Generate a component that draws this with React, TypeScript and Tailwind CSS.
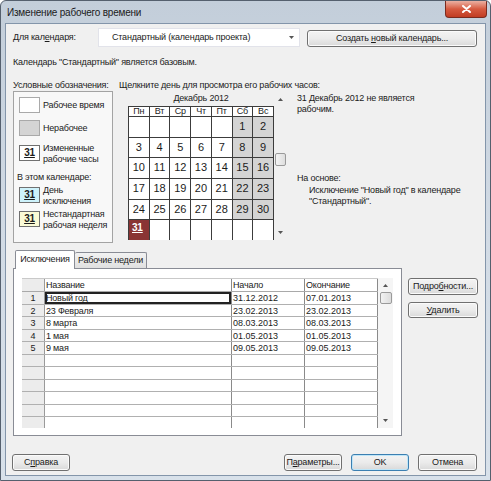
import React from "react";

const weeks: (number | null)[][] = [
  [null, null, null, null, null, 1, 2],
  [3, 4, 5, 6, 7, 8, 9],
  [10, 11, 12, 13, 14, 15, 16],
  [17, 18, 19, 20, 21, 22, 23],
  [24, 25, 26, 27, 28, 29, 30],
  [31, null, null, null, null, null, null]
];

const dayNames = ["Пн", "Вт", "Ср", "Чт", "Пт", "Сб", "Вс"];

const exceptions = [
  ["1", "Новый год", "31.12.2012", "07.01.2013"],
  ["2", "23 Февраля", "23.02.2013", "23.02.2013"],
  ["3", "8 марта", "08.03.2013", "08.03.2013"],
  ["4", "1 мая", "01.05.2013", "01.05.2013"],
  ["5", "9 мая", "09.05.2013", "09.05.2013"]
];

function Btn({
  children,
  className = "",
  primary = false
}: {
  children: React.ReactNode;
  className?: string;
  primary?: boolean;
}) {
  return (
    <button
      type="button"
      className={`flex items-center justify-center rounded-[3px] border bg-gradient-to-b from-[#f3f3f3] via-[#ebebeb] to-[#d9d9d9] text-[9px] leading-none text-[#1a1a1a] ${
        primary
          ? "border-[#3c7fb1] shadow-[inset_0_0_0_1px_#bfe6f8]"
          : "border-[#707070] shadow-[inset_0_0_0_1px_#fbfbfb]"
      } ${className}`}
    >
      <span className="whitespace-nowrap">{children}</span>
    </button>
  );
}

function Arrow({ down = false }: { down?: boolean }) {
  return (
    <svg width="5" height="3" viewBox="0 0 5 3" className="block">
      <path d={down ? "M0 0h5L2.5 3z" : "M0 3h5L2.5 0z"} fill="#555" />
    </svg>
  );
}

function Swatch({ className = "", num = false }: { className?: string; num?: boolean }) {
  return (
    <div
      className={`flex h-[16px] w-[21px] shrink-0 items-center justify-center border ${className}`}
    >
      {num && <span className="text-[10px] font-bold underline leading-none">31</span>}
    </div>
  );
}

function Calendar() {
  return (
    <div className="grid h-[134px] w-[146px] grid-cols-7 grid-rows-[9px_repeat(6,minmax(0,1fr))] gap-px bg-[#3c3c3c] px-px pt-px">
      {dayNames.map((d) => (
        <div key={d} className="flex items-center justify-center bg-white text-[9px] leading-none">
          {d}
        </div>
      ))}
      {weeks.map((week, wi) =>
        week.map((day, di) => {
          if (day === 31) {
            return (
              <div key={`${wi}-${di}`} className="bg-[#8a3434] pl-[3px] pt-[3px] text-[10px] font-bold leading-none text-white">
                <span className="underline">31</span>
              </div>
            );
          }
          const weekend = day !== null && di >= 5;
          return (
            <div
              key={`${wi}-${di}`}
              className={`flex justify-center pt-[4px] text-[11px] leading-none tracking-normal ${weekend ? "bg-[#d4d4d4]" : "bg-white"}`}
            >
              {day}
            </div>
          );
        })
      )}
    </div>
  );
}

function ExceptionTable() {
  const empty = Array.from({ length: 6 }, () => ["", "", "", ""]);
  const rows = [...exceptions, ...empty];
  return (
    <div className="flex h-[150px] w-[371px]">
      <div className="flex w-[356px] flex-col overflow-hidden border-t border-[#c9c9c9]">
        <div className="flex h-[13px] shrink-0 border-b border-[#a9a9a9] leading-[12px]">
          <div className="w-[23px] border-r border-[#9a9a9a] bg-[#ececec]" />
          <div className="w-[187px] border-r border-[#8a8a8a] bg-white pl-[1px]">Название</div>
          <div className="w-[73px] border-r border-[#8a8a8a] bg-white pl-[1px]">Начало</div>
          <div className="w-[73px] border-r border-[#8a8a8a] bg-white pl-[1px]">Окончание</div>
        </div>
        {rows.map((r, i) => (
          <div key={i} className="flex h-[12.5px] shrink-0 border-b border-[#b0b0b0] leading-[12px]">
            <div className="w-[23px] border-r border-[#9a9a9a] bg-[#ececec] text-center">{r[0]}</div>
            <div
              className={`w-[187px] border-r border-[#8a8a8a] pl-[1px] ${
                i === 0 ? "shadow-[inset_0_0_0_2px_#222]" : ""
              }`}
            >
              {r[1]}
            </div>
            <div className="w-[73px] border-r border-[#8a8a8a] pl-[1px] tracking-normal">{r[2]}</div>
            <div className="w-[73px] border-r border-[#8a8a8a] pl-[1px] tracking-normal">{r[3]}</div>
          </div>
        ))}
      </div>
      <div className="flex w-[15px] flex-col items-center bg-[#f5f5f5]">
        <div className="mt-[6px]">
          <Arrow />
        </div>
        <div className="mt-[5px] h-[12px] w-[12px] rounded-[2px] border border-[#9a9a9a] bg-gradient-to-r from-[#f2f2f2] to-[#dcdcdc]" />
        <div className="flex-1" />
        <div className="mb-[6px]">
          <Arrow down />
        </div>
      </div>
    </div>
  );
}

export default function App() {
  return (
    <div className="relative flex h-[481px] w-[491px] flex-col overflow-hidden rounded-t-[6px] border border-[#55606e] bg-gradient-to-b from-[#c3ceda] via-[#d2dbe5] to-[#d8e1ea] px-[4px] pb-[4px] font-['Liberation_Sans',Arial,sans-serif] text-[9px] tracking-[-0.2px] text-[#1b1b1b]">
      <div className="h-[22px] shrink-0 pl-[2px] pt-[6px] text-[10px] leading-[12px]">
        Изменение рабочего времени
      </div>
      <div className="absolute right-[3px] top-0 flex h-[17px] w-[42px] items-center justify-center rounded-b-[4px] border border-t-0 border-[#7a2b1f] bg-gradient-to-b from-[#eab0a2] via-[#d65a40] to-[#c13c22]">
        <svg width="9" height="8" viewBox="0 0 9 8">
          <path d="M1 1l7 6M8 1L1 7" stroke="#fff" strokeWidth="2" strokeLinecap="round" />
        </svg>
      </div>

      <div className="flex flex-1 flex-col whitespace-nowrap border border-[#8395aa] bg-[#f0f0f0]">
        {/* calendar selector */}
        <div className="mt-[4px] flex h-[19px] items-end pl-[7px]">
          <div className="flex h-[19px] w-[85px] items-center">
            <span>
              Для кал<span className="underline">е</span>ндаря:
            </span>
          </div>
          <div className="flex h-[19px] w-[202px] items-center justify-between border border-[#e2e3ea] bg-white pl-[13px] pr-[5px]">
            <span>Стандартный (календарь проекта)</span>
            <Arrow down />
          </div>
          <Btn className="ml-[7px] h-[17px] w-[170px]">
            Создать <span className="underline">н</span>овый календарь...
          </Btn>
        </div>

        <div className="mt-[9px] h-[12px] pl-[7px] leading-[12px]">
          Календарь "Стандартный" является базовым.
        </div>

        {/* legend + calendar + info */}
        <div className="mt-[11px] flex h-[164px] pl-[7px]">
          <div className="flex w-[100px] flex-col">
            <div className="h-[12px] leading-[12px]">Условные обозначения:</div>
            <div className="flex h-[152px] flex-col border border-[#a3a3a3] bg-[#f8f8f8] pl-[5px] pt-[5px] leading-[11px]">
              <div className="flex h-[16px] items-center gap-[3px]">
                <Swatch className="border-[#a9a9a9] bg-white" />
                <span>Рабочее время</span>
              </div>
              <div className="mt-[7px] flex h-[16px] items-center gap-[3px]">
                <Swatch className="border-[#a9a9a9] bg-[#d4d4d4]" />
                <span>Нерабочее</span>
              </div>
              <div className="mt-[9px] flex items-start gap-[3px]">
                <Swatch num className="border-[#707070] bg-white" />
                <span className="-mt-[2px]">
                  Измененные
                  <br />
                  рабочие часы
                </span>
              </div>
              <div className="-ml-[2px] mt-[6px] h-[12px] leading-[12px]">В этом календаре:</div>
              <div className="mt-[4px] flex items-start gap-[3px]">
                <Swatch num className="border-[#707070] bg-[#cdf2fb]" />
                <span className="-mt-[2px]">
                  День
                  <br />
                  исключения
                </span>
              </div>
              <div className="mt-[4px] flex items-start gap-[3px]">
                <Swatch num className="border-[#707070] bg-[#fbfbd6]" />
                <span className="-mt-[2px]">
                  Нестандартная
                  <br />
                  рабочая неделя
                </span>
              </div>
            </div>
          </div>

          <div className="ml-[6px] flex w-[178px] flex-col">
            <div className="h-[12px] leading-[12px]">
              Щелкните день для просмотра его рабочих часов:
            </div>
            <div className="flex">
              <div className="ml-[9px] flex w-[146px] flex-col">
                <div className="h-[15px] text-center leading-[15px]">Декабрь 2012</div>
                <Calendar />
              </div>
              <div className="ml-px flex h-[149px] w-[11px] flex-col items-center">
                <div className="mt-[7px]">
                  <Arrow />
                </div>
                <div className="mt-[52px] h-[13px] w-[11px] rounded-[2px] border border-[#9a9a9a] bg-gradient-to-r from-[#f4f4f4] to-[#dedede]" />
                <div className="flex-1" />
                <div className="mb-[6px]">
                  <Arrow down />
                </div>
              </div>
            </div>
          </div>

          <div className="flex flex-col pt-[14px] leading-[11px]">
            <div>
              31 Декабрь 2012 не является
              <br />
              рабочим.
            </div>
            <div className="mt-[58px]">На основе:</div>
            <div className="mt-[1px] pl-[12px]">
              Исключение "Новый год" в календаре
              <br />
              "Стандартный".
            </div>
          </div>
        </div>

        {/* tabs */}
        <div className="mt-[7px] flex h-[186px] pl-[7px]">
          <div className="flex w-[389px] flex-col">
            <div className="flex h-[18px] items-end pl-[2px]">
              <div className="relative top-px z-10 flex h-[19px] w-[60px] items-center justify-center rounded-t-[2px] border border-b-0 border-[#898c95] bg-white">
                Исключения
              </div>
              <div className="flex h-[16px] w-[72px] items-center justify-center rounded-t-[2px] border border-b-0 border-l-0 border-[#898c95] bg-gradient-to-b from-[#f2f2f2] to-[#e0e0e0]">
                Рабочие недели
              </div>
            </div>
            <div className="h-[168px] border border-[#898c95] bg-white pl-[8px] pt-[9px]">
              <ExceptionTable />
            </div>
          </div>
          <div className="ml-[6px] flex w-[70px] flex-col pt-[28px]">
            <Btn className="h-[17px] w-[70px]">
              Подро<span className="underline">б</span>ности...
            </Btn>
            <Btn className="mt-[7px] h-[16px] w-[70px]">
              <span className="underline">У</span>далить
            </Btn>
          </div>
        </div>

        {/* footer */}
        <div className="mt-[18px] flex h-[17px] pl-[6px] pr-[8px]">
          <Btn className="h-[17px] w-[58px]">
            С<span className="underline">п</span>равка
          </Btn>
          <div className="flex-1" />
          <Btn className="h-[17px] w-[58px]">
            П<span className="underline">а</span>раметры...
          </Btn>
          <Btn primary className="ml-[9px] h-[17px] w-[58px]">
            OK
          </Btn>
          <Btn className="ml-[9px] h-[17px] w-[59px]">Отмена</Btn>
        </div>
      </div>
    </div>
  );
}
